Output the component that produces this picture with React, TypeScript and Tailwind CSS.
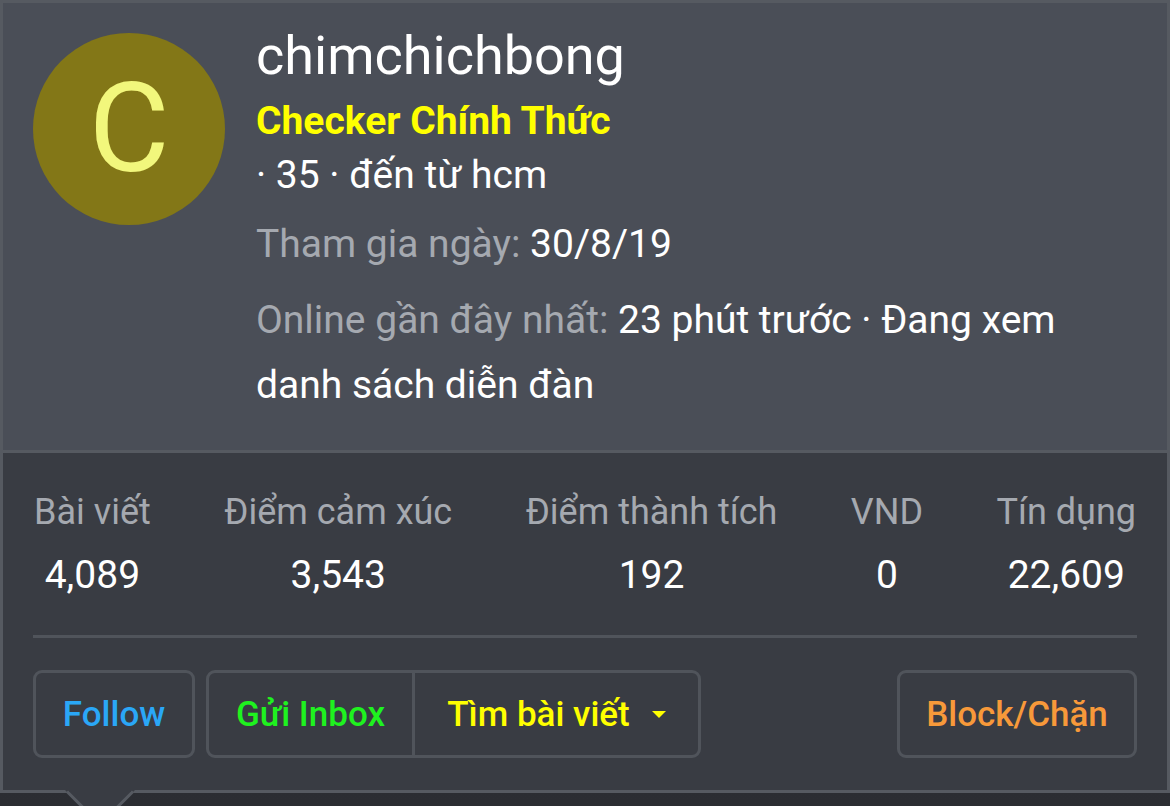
const stats = [
  { label: "Bài viết", value: "4,089" },
  { label: "Điểm cảm xúc", value: "3,543" },
  { label: "Điểm thành tích", value: "192" },
  { label: "VND", value: "0" },
  { label: "Tín dụng", value: "22,609" },
]

export default function App() {
  return (
    <div className="relative w-[1170px] h-[806px] overflow-hidden bg-gradient-to-b from-[#35373d] to-[#2b2d32] font-['Roboto',sans-serif]">
      <div className="w-[1170px] border-[3px] border-[#565a61] bg-[#393c43]">
        {/* header */}
        <div className="flex gap-[31px] bg-[#4a4e57] px-[30px] pt-[22px] pb-[32px] border-b-[3px] border-[#565a61]">
          <div className="mt-[8px] flex h-[192px] w-[192px] shrink-0 items-center justify-center rounded-full bg-[#837717] text-[124px] leading-none text-[#f2f77c]">
            C
          </div>
          <div className="flex flex-col text-white">
            <div className="text-[54px] leading-[62px]">chimchichbong</div>
            <div className="text-[39px] font-bold leading-[68px] text-[#ffff00]">Checker Chính Thức</div>
            <div className="text-[39px] leading-[40px]">· 35 · đến từ hcm</div>
            <div className="mt-[17px] text-[39px] leading-[65px]">
              <span className="text-[#a5a9b0]">Tham gia ngày:</span> 30/8/19
            </div>
            <div className="mt-[11px] text-[39px] leading-[65px]">
              <span className="text-[#a5a9b0]">Online gần đây nhất:</span> 23 phút trước · Đang xem
              <br />
              danh sách diễn đàn
            </div>
          </div>
        </div>

        {/* stats + actions */}
        <div className="px-[30px] pt-[37px] pb-[32px]">
          <div className="flex justify-between px-[1px]">
            {stats.map((s) => (
              <div key={s.label} className="flex flex-col items-center">
                <div className="text-[36px] leading-[44px] text-[#a5a9b0]">{s.label}</div>
                <div className="mt-[19px] text-[39px] leading-[44px] text-white">{s.value}</div>
              </div>
            ))}
          </div>

          <div className="mt-[38px] h-[3px] bg-[#50545b]" />

          <div className="mt-[32px] flex text-[35px] font-medium leading-none">
            <button className="flex h-[88px] w-[162px] items-center justify-center rounded-[9px] border-[3px] border-[#50545b] text-[#2aa7f7]">
              Follow
            </button>
            <div className="ml-[11px] flex h-[88px] rounded-[9px] border-[3px] border-[#50545b]">
              <button className="flex w-[206px] items-center justify-center border-r-[3px] border-[#50545b] text-[#1ff21f]">
                Gửi Inbox
              </button>
              <button className="flex w-[283px] items-center justify-center gap-[22px] text-[#ffff00]">
                Tìm bài viết
                <svg width="14" height="8" viewBox="0 0 14 8" className="mt-[2px]">
                  <path d="M0 0h14L7 7z" fill="#ffff00" />
                </svg>
              </button>
            </div>
            <button className="ml-auto flex h-[88px] w-[240px] items-center justify-center rounded-[9px] border-[3px] border-[#50545b] text-[#f7993a]">
              Block/Chặn
            </button>
          </div>
        </div>
      </div>

      {/* tooltip arrow */}
      <svg className="absolute left-[65px] top-[790px]" width="70" height="36" viewBox="0 0 70 36">
        <path d="M0 0 L35 35 L70 0 Z" fill="#393c43" />
        <path d="M2 1.5 L35 34.5 L68 1.5" fill="none" stroke="#565a61" strokeWidth="3" />
        <rect x="4" y="0" width="62" height="2" fill="#393c43" />
      </svg>
    </div>
  )
}
